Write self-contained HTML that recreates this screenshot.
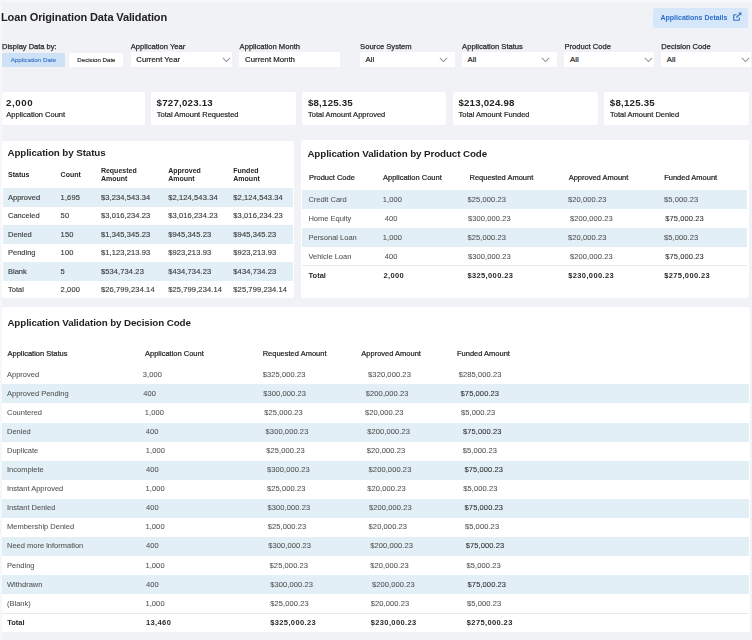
<!DOCTYPE html>
<html><head><meta charset="utf-8"><style>
html,body{margin:0;padding:0;}
body{width:752px;height:640px;overflow:hidden;background:#f0f2f5;position:relative;font-family:"Liberation Sans",sans-serif;}
.t{position:absolute;white-space:nowrap;line-height:1;}
#w{position:absolute;left:0;top:0;width:752px;height:640px;filter:blur(0.4px);}
.r{position:absolute;}
</style></head><body><div id="w">
<div class="r" style="left:0.00px;top:0.00px;width:1.80px;height:640.00px;background:#f6f7f9;"></div>
<div class="r" style="left:0.00px;top:0.00px;width:752.00px;height:1.80px;background:#f6f7f9;"></div>
<div class="t" style="left:1.00px;top:11.79px;font-size:11.0px;font-weight:700;color:#222222;letter-spacing:-0.12px;">Loan Origination Data Validation</div>
<div class="r" style="left:653.00px;top:7.90px;width:95.30px;height:20.00px;background:#d5e7f9;border-radius:3px;"></div>
<div class="t" style="left:660.50px;top:14.17px;font-size:7.0px;font-weight:700;color:#2d6dcc;">Applications Details</div>
<svg class="r" style="left:732px;top:11.9px;width:10px;height:9px" viewBox="0 0 10 9">
<path d="M4.6 2.7H2.2Q1.7 2.7 1.7 3.2V7.7Q1.7 8.2 2.2 8.2H6.9Q7.4 8.2 7.4 7.7V5.4" fill="none" stroke="#3470bd" stroke-width="1.15"/>
<path d="M4.3 5.5L8.7 1.3" fill="none" stroke="#3470bd" stroke-width="1.1"/>
<path d="M6.3 0.6H9.4V3.7Z" fill="#3470bd"/>
</svg>
<div class="t" style="left:2.00px;top:42.65px;font-size:7.5px;color:#2a2a2a;-webkit-text-stroke:0.25px #2a2a2a;">Display Data by:</div>
<div class="r" style="left:2.10px;top:53.00px;width:62.70px;height:14.20px;background:#cee2f7;border-radius:1.5px;"></div>
<div class="t" style="left:10.70px;top:57.11px;font-size:6.25px;color:#3a76c6;-webkit-text-stroke:0.12px #3a76c6;">Application Date</div>
<div class="r" style="left:69.00px;top:53.00px;width:54.00px;height:14.20px;background:#ffffff;border-radius:1.5px;"></div>
<div class="t" style="left:77.30px;top:57.19px;font-size:6.15px;color:#2a2a2a;-webkit-text-stroke:0.15px #2a2a2a;">Decision Date</div>
<div class="t" style="left:130.80px;top:42.97px;font-size:7.6px;color:#2a2a2a;-webkit-text-stroke:0.25px #2a2a2a;">Application Year</div>
<div class="r" style="left:130.50px;top:52.30px;width:101.40px;height:14.30px;background:#ffffff;border-radius:1px;"></div>
<div class="t" style="left:136.30px;top:56.00px;font-size:7.8px;color:#2a2a2a;-webkit-text-stroke:0.22px #2a2a2a;">Current Year</div>
<svg class="r" style="left:222.10px;top:56.8px;width:9px;height:5.5px" viewBox="0 0 9 5.5"><path d="M0.9 0.9L4.5 4.6L8.1 0.9" fill="none" stroke="#94979c" stroke-width="1.05"/></svg>
<div class="t" style="left:239.60px;top:42.97px;font-size:7.6px;color:#2a2a2a;-webkit-text-stroke:0.25px #2a2a2a;">Application Month</div>
<div class="r" style="left:239.30px;top:52.30px;width:101.00px;height:14.30px;background:#ffffff;border-radius:1px;"></div>
<div class="t" style="left:245.10px;top:56.00px;font-size:7.8px;color:#2a2a2a;-webkit-text-stroke:0.22px #2a2a2a;">Current Month</div>
<div class="t" style="left:360.10px;top:42.97px;font-size:7.6px;color:#2a2a2a;-webkit-text-stroke:0.25px #2a2a2a;">Source System</div>
<div class="r" style="left:359.80px;top:52.30px;width:94.80px;height:14.30px;background:#ffffff;border-radius:1px;"></div>
<div class="t" style="left:365.60px;top:56.00px;font-size:7.8px;color:#2a2a2a;-webkit-text-stroke:0.22px #2a2a2a;">All</div>
<svg class="r" style="left:438.80px;top:56.8px;width:9px;height:5.5px" viewBox="0 0 9 5.5"><path d="M0.9 0.9L4.5 4.6L8.1 0.9" fill="none" stroke="#94979c" stroke-width="1.05"/></svg>
<div class="t" style="left:462.10px;top:42.97px;font-size:7.6px;color:#2a2a2a;-webkit-text-stroke:0.25px #2a2a2a;">Application Status</div>
<div class="r" style="left:461.80px;top:52.30px;width:95.20px;height:14.30px;background:#ffffff;border-radius:1px;"></div>
<div class="t" style="left:467.60px;top:56.00px;font-size:7.8px;color:#2a2a2a;-webkit-text-stroke:0.22px #2a2a2a;">All</div>
<svg class="r" style="left:541.40px;top:56.8px;width:9px;height:5.5px" viewBox="0 0 9 5.5"><path d="M0.9 0.9L4.5 4.6L8.1 0.9" fill="none" stroke="#94979c" stroke-width="1.05"/></svg>
<div class="t" style="left:564.50px;top:42.97px;font-size:7.6px;color:#2a2a2a;-webkit-text-stroke:0.25px #2a2a2a;">Product Code</div>
<div class="r" style="left:564.20px;top:52.30px;width:89.70px;height:14.30px;background:#ffffff;border-radius:1px;"></div>
<div class="t" style="left:570.00px;top:56.00px;font-size:7.8px;color:#2a2a2a;-webkit-text-stroke:0.22px #2a2a2a;">All</div>
<svg class="r" style="left:643.80px;top:56.8px;width:9px;height:5.5px" viewBox="0 0 9 5.5"><path d="M0.9 0.9L4.5 4.6L8.1 0.9" fill="none" stroke="#94979c" stroke-width="1.05"/></svg>
<div class="t" style="left:661.30px;top:42.97px;font-size:7.6px;color:#2a2a2a;-webkit-text-stroke:0.25px #2a2a2a;">Decision Code</div>
<div class="r" style="left:661.00px;top:52.30px;width:90.20px;height:14.30px;background:#ffffff;border-radius:1px;"></div>
<div class="t" style="left:666.80px;top:56.00px;font-size:7.8px;color:#2a2a2a;-webkit-text-stroke:0.22px #2a2a2a;">All</div>
<svg class="r" style="left:740.50px;top:56.8px;width:9px;height:5.5px" viewBox="0 0 9 5.5"><path d="M0.9 0.9L4.5 4.6L8.1 0.9" fill="none" stroke="#94979c" stroke-width="1.05"/></svg>
<div class="r" style="left:2.20px;top:91.70px;width:142.80px;height:32.90px;background:#ffffff;border-radius:2px;"></div>
<div class="t" style="left:6.10px;top:98.39px;font-size:9.7px;font-weight:700;color:#222;letter-spacing:0.6px;">2,000</div>
<div class="t" style="left:6.30px;top:110.85px;font-size:7.5px;color:#262626;-webkit-text-stroke:0.2px #262626;">Application Count</div>
<div class="r" style="left:151.00px;top:91.70px;width:144.60px;height:32.90px;background:#ffffff;border-radius:2px;"></div>
<div class="t" style="left:156.60px;top:98.39px;font-size:9.7px;font-weight:700;color:#222;letter-spacing:0.22px;">$727,023.13</div>
<div class="t" style="left:156.80px;top:110.85px;font-size:7.5px;color:#262626;-webkit-text-stroke:0.2px #262626;">Total Amount Requested</div>
<div class="r" style="left:302.30px;top:91.70px;width:143.70px;height:32.90px;background:#ffffff;border-radius:2px;"></div>
<div class="t" style="left:307.90px;top:98.39px;font-size:9.7px;font-weight:700;color:#222;letter-spacing:0.22px;">$8,125.35</div>
<div class="t" style="left:308.10px;top:110.85px;font-size:7.5px;color:#262626;-webkit-text-stroke:0.2px #262626;">Total Amount Approved</div>
<div class="r" style="left:452.80px;top:91.70px;width:144.80px;height:32.90px;background:#ffffff;border-radius:2px;"></div>
<div class="t" style="left:458.40px;top:98.39px;font-size:9.7px;font-weight:700;color:#222;letter-spacing:0.22px;">$213,024.98</div>
<div class="t" style="left:458.60px;top:110.85px;font-size:7.5px;color:#262626;-webkit-text-stroke:0.2px #262626;">Total Amount Funded</div>
<div class="r" style="left:604.20px;top:91.70px;width:144.50px;height:32.90px;background:#ffffff;border-radius:2px;"></div>
<div class="t" style="left:609.80px;top:98.39px;font-size:9.7px;font-weight:700;color:#222;letter-spacing:0.22px;">$8,125.35</div>
<div class="t" style="left:610.00px;top:110.85px;font-size:7.5px;color:#262626;-webkit-text-stroke:0.2px #262626;">Total Amount Denied</div>
<div class="r" style="left:2.30px;top:140.50px;width:291.90px;height:157.40px;background:#ffffff;border-radius:2px;"></div>
<div class="t" style="left:7.50px;top:148.00px;font-size:9.8px;font-weight:700;color:#222222;letter-spacing:-0.1px;">Application by Status</div>
<div class="t" style="left:8.00px;top:171.37px;font-size:7.0px;font-weight:700;color:#262626;">Status</div>
<div class="t" style="left:60.60px;top:171.37px;font-size:7.0px;font-weight:700;color:#262626;">Count</div>
<div class="t" style="left:100.90px;top:167.17px;font-size:7.0px;font-weight:700;color:#262626;">Requested</div>
<div class="t" style="left:100.90px;top:175.47px;font-size:7.0px;font-weight:700;color:#262626;">Amount</div>
<div class="t" style="left:168.20px;top:167.17px;font-size:7.0px;font-weight:700;color:#262626;">Approved</div>
<div class="t" style="left:168.20px;top:175.47px;font-size:7.0px;font-weight:700;color:#262626;">Amount</div>
<div class="t" style="left:233.30px;top:167.17px;font-size:7.0px;font-weight:700;color:#262626;">Funded</div>
<div class="t" style="left:233.30px;top:175.47px;font-size:7.0px;font-weight:700;color:#262626;">Amount</div>
<div class="r" style="left:2.50px;top:188.00px;width:290.70px;height:18.50px;background:#e2eff7;"></div>
<div class="t" style="left:8.00px;top:193.95px;font-size:7.5px;color:#3f3f3f;-webkit-text-stroke:0.15px #3f3f3f;">Approved</div>
<div class="t" style="left:60.60px;top:193.95px;font-size:7.5px;color:#3f3f3f;letter-spacing:0.12px;-webkit-text-stroke:0.15px #3f3f3f;">1,695</div>
<div class="t" style="left:100.90px;top:193.95px;font-size:7.5px;color:#3f3f3f;letter-spacing:0.12px;-webkit-text-stroke:0.15px #3f3f3f;">$3,234,543.34</div>
<div class="t" style="left:168.20px;top:193.95px;font-size:7.5px;color:#3f3f3f;letter-spacing:0.12px;-webkit-text-stroke:0.15px #3f3f3f;">$2,124,543.34</div>
<div class="t" style="left:233.30px;top:193.95px;font-size:7.5px;color:#3f3f3f;letter-spacing:0.12px;-webkit-text-stroke:0.15px #3f3f3f;">$2,124,543.34</div>
<div class="t" style="left:8.00px;top:212.45px;font-size:7.5px;color:#3f3f3f;-webkit-text-stroke:0.15px #3f3f3f;">Canceled</div>
<div class="t" style="left:60.60px;top:212.45px;font-size:7.5px;color:#3f3f3f;letter-spacing:0.12px;-webkit-text-stroke:0.15px #3f3f3f;">50</div>
<div class="t" style="left:100.90px;top:212.45px;font-size:7.5px;color:#3f3f3f;letter-spacing:0.12px;-webkit-text-stroke:0.15px #3f3f3f;">$3,016,234.23</div>
<div class="t" style="left:168.20px;top:212.45px;font-size:7.5px;color:#3f3f3f;letter-spacing:0.12px;-webkit-text-stroke:0.15px #3f3f3f;">$3,016,234.23</div>
<div class="t" style="left:233.30px;top:212.45px;font-size:7.5px;color:#3f3f3f;letter-spacing:0.12px;-webkit-text-stroke:0.15px #3f3f3f;">$3,016,234.23</div>
<div class="r" style="left:2.50px;top:225.00px;width:290.70px;height:18.50px;background:#e2eff7;"></div>
<div class="t" style="left:8.00px;top:230.95px;font-size:7.5px;color:#3f3f3f;-webkit-text-stroke:0.15px #3f3f3f;">Denied</div>
<div class="t" style="left:60.60px;top:230.95px;font-size:7.5px;color:#3f3f3f;letter-spacing:0.12px;-webkit-text-stroke:0.15px #3f3f3f;">150</div>
<div class="t" style="left:100.90px;top:230.95px;font-size:7.5px;color:#3f3f3f;letter-spacing:0.12px;-webkit-text-stroke:0.15px #3f3f3f;">$1,345,345.23</div>
<div class="t" style="left:168.20px;top:230.95px;font-size:7.5px;color:#3f3f3f;letter-spacing:0.12px;-webkit-text-stroke:0.15px #3f3f3f;">$945,345.23</div>
<div class="t" style="left:233.30px;top:230.95px;font-size:7.5px;color:#3f3f3f;letter-spacing:0.12px;-webkit-text-stroke:0.15px #3f3f3f;">$945,345.23</div>
<div class="t" style="left:8.00px;top:249.45px;font-size:7.5px;color:#3f3f3f;-webkit-text-stroke:0.15px #3f3f3f;">Pending</div>
<div class="t" style="left:60.60px;top:249.45px;font-size:7.5px;color:#3f3f3f;letter-spacing:0.12px;-webkit-text-stroke:0.15px #3f3f3f;">100</div>
<div class="t" style="left:100.90px;top:249.45px;font-size:7.5px;color:#3f3f3f;letter-spacing:0.12px;-webkit-text-stroke:0.15px #3f3f3f;">$1,123,213.93</div>
<div class="t" style="left:168.20px;top:249.45px;font-size:7.5px;color:#3f3f3f;letter-spacing:0.12px;-webkit-text-stroke:0.15px #3f3f3f;">$923,213.93</div>
<div class="t" style="left:233.30px;top:249.45px;font-size:7.5px;color:#3f3f3f;letter-spacing:0.12px;-webkit-text-stroke:0.15px #3f3f3f;">$923,213.93</div>
<div class="r" style="left:2.50px;top:262.00px;width:290.70px;height:18.50px;background:#e2eff7;"></div>
<div class="t" style="left:8.00px;top:267.95px;font-size:7.5px;color:#3f3f3f;-webkit-text-stroke:0.15px #3f3f3f;">Blank</div>
<div class="t" style="left:60.60px;top:267.95px;font-size:7.5px;color:#3f3f3f;letter-spacing:0.12px;-webkit-text-stroke:0.15px #3f3f3f;">5</div>
<div class="t" style="left:100.90px;top:267.95px;font-size:7.5px;color:#3f3f3f;letter-spacing:0.12px;-webkit-text-stroke:0.15px #3f3f3f;">$534,734.23</div>
<div class="t" style="left:168.20px;top:267.95px;font-size:7.5px;color:#3f3f3f;letter-spacing:0.12px;-webkit-text-stroke:0.15px #3f3f3f;">$434,734.23</div>
<div class="t" style="left:233.30px;top:267.95px;font-size:7.5px;color:#3f3f3f;letter-spacing:0.12px;-webkit-text-stroke:0.15px #3f3f3f;">$434,734.23</div>
<div class="t" style="left:8.00px;top:286.45px;font-size:7.5px;color:#3f3f3f;-webkit-text-stroke:0.15px #3f3f3f;">Total</div>
<div class="t" style="left:60.60px;top:286.45px;font-size:7.5px;color:#3f3f3f;letter-spacing:0.12px;-webkit-text-stroke:0.15px #3f3f3f;">2,000</div>
<div class="t" style="left:100.90px;top:286.45px;font-size:7.5px;color:#3f3f3f;letter-spacing:0.12px;-webkit-text-stroke:0.15px #3f3f3f;">$26,799,234.14</div>
<div class="t" style="left:168.20px;top:286.45px;font-size:7.5px;color:#3f3f3f;letter-spacing:0.12px;-webkit-text-stroke:0.15px #3f3f3f;">$25,799,234.14</div>
<div class="t" style="left:233.30px;top:286.45px;font-size:7.5px;color:#3f3f3f;letter-spacing:0.12px;-webkit-text-stroke:0.15px #3f3f3f;">$25,799,234.14</div>
<div class="r" style="left:301.00px;top:139.80px;width:448.20px;height:158.10px;background:#ffffff;border-radius:2px;"></div>
<div class="t" style="left:307.40px;top:148.70px;font-size:9.8px;font-weight:700;color:#222222;letter-spacing:-0.1px;">Application Validation by Product Code</div>
<div class="t" style="left:309.00px;top:174.25px;font-size:7.5px;color:#262626;-webkit-text-stroke:0.22px #262626;">Product Code</div>
<div class="t" style="left:383.00px;top:174.25px;font-size:7.5px;color:#262626;-webkit-text-stroke:0.22px #262626;">Application Count</div>
<div class="t" style="left:469.50px;top:174.25px;font-size:7.5px;color:#262626;-webkit-text-stroke:0.22px #262626;">Requested Amount</div>
<div class="t" style="left:568.70px;top:174.25px;font-size:7.5px;color:#262626;-webkit-text-stroke:0.22px #262626;">Approved Amount</div>
<div class="t" style="left:664.20px;top:174.25px;font-size:7.5px;color:#262626;-webkit-text-stroke:0.22px #262626;">Funded Amount</div>
<div class="r" style="left:301.60px;top:190.00px;width:445.80px;height:18.90px;background:#e2eff7;"></div>
<div class="t" style="left:308.40px;top:195.85px;font-size:7.5px;color:#545454;-webkit-text-stroke:0.06px #545454;">Credit Card</div>
<div class="t" style="left:382.80px;top:195.85px;font-size:7.5px;color:#545454;letter-spacing:0.1px;-webkit-text-stroke:0.06px #545454;">1,000</div>
<div class="t" style="left:467.40px;top:195.85px;font-size:7.5px;color:#545454;letter-spacing:0.1px;-webkit-text-stroke:0.06px #545454;">$25,000.23</div>
<div class="t" style="left:568.00px;top:195.85px;font-size:7.5px;color:#545454;letter-spacing:0.1px;-webkit-text-stroke:0.06px #545454;">$20,000.23</div>
<div class="t" style="left:664.00px;top:195.85px;font-size:7.5px;color:#545454;letter-spacing:0.1px;-webkit-text-stroke:0.06px #545454;">$5,000.23</div>
<div class="t" style="left:308.40px;top:214.75px;font-size:7.5px;color:#545454;-webkit-text-stroke:0.06px #545454;">Home Equity</div>
<div class="t" style="left:384.80px;top:214.75px;font-size:7.5px;color:#545454;letter-spacing:0.1px;-webkit-text-stroke:0.06px #545454;">400</div>
<div class="t" style="left:468.00px;top:214.75px;font-size:7.5px;color:#545454;letter-spacing:0.1px;-webkit-text-stroke:0.06px #545454;">$300,000.23</div>
<div class="t" style="left:570.00px;top:214.75px;font-size:7.5px;color:#545454;letter-spacing:0.1px;-webkit-text-stroke:0.06px #545454;">$200,000.23</div>
<div class="t" style="left:665.30px;top:214.75px;font-size:7.5px;color:#2e2e2e;letter-spacing:0.1px;-webkit-text-stroke:0.06px #2e2e2e;">$75,000.23</div>
<div class="r" style="left:301.60px;top:227.80px;width:445.80px;height:18.90px;background:#e2eff7;"></div>
<div class="t" style="left:308.40px;top:233.65px;font-size:7.5px;color:#545454;-webkit-text-stroke:0.06px #545454;">Personal Loan</div>
<div class="t" style="left:382.80px;top:233.65px;font-size:7.5px;color:#545454;letter-spacing:0.1px;-webkit-text-stroke:0.06px #545454;">1,000</div>
<div class="t" style="left:467.40px;top:233.65px;font-size:7.5px;color:#545454;letter-spacing:0.1px;-webkit-text-stroke:0.06px #545454;">$25,000.23</div>
<div class="t" style="left:568.00px;top:233.65px;font-size:7.5px;color:#545454;letter-spacing:0.1px;-webkit-text-stroke:0.06px #545454;">$20,000.23</div>
<div class="t" style="left:664.00px;top:233.65px;font-size:7.5px;color:#545454;letter-spacing:0.1px;-webkit-text-stroke:0.06px #545454;">$5,000.23</div>
<div class="t" style="left:308.40px;top:252.55px;font-size:7.5px;color:#545454;-webkit-text-stroke:0.06px #545454;">Vehicle Loan</div>
<div class="t" style="left:384.80px;top:252.55px;font-size:7.5px;color:#545454;letter-spacing:0.1px;-webkit-text-stroke:0.06px #545454;">400</div>
<div class="t" style="left:468.00px;top:252.55px;font-size:7.5px;color:#545454;letter-spacing:0.1px;-webkit-text-stroke:0.06px #545454;">$300,000.23</div>
<div class="t" style="left:570.00px;top:252.55px;font-size:7.5px;color:#545454;letter-spacing:0.1px;-webkit-text-stroke:0.06px #545454;">$200,000.23</div>
<div class="t" style="left:665.30px;top:252.55px;font-size:7.5px;color:#2e2e2e;letter-spacing:0.1px;-webkit-text-stroke:0.06px #2e2e2e;">$75,000.23</div>
<div class="r" style="left:301.60px;top:265.30px;width:445.80px;height:1.00px;background:#e6e8ec;"></div>
<div class="t" style="left:308.60px;top:272.45px;font-size:7.5px;font-weight:700;color:#2a2a2a;">Total</div>
<div class="t" style="left:383.40px;top:272.45px;font-size:7.5px;font-weight:700;color:#2a2a2a;letter-spacing:0.38px;">2,000</div>
<div class="t" style="left:467.40px;top:272.45px;font-size:7.5px;font-weight:700;color:#2a2a2a;letter-spacing:0.38px;">$325,000.23</div>
<div class="t" style="left:568.20px;top:272.45px;font-size:7.5px;font-weight:700;color:#2a2a2a;letter-spacing:0.38px;">$230,000.23</div>
<div class="t" style="left:664.20px;top:272.45px;font-size:7.5px;font-weight:700;color:#2a2a2a;letter-spacing:0.38px;">$275,000.23</div>
<div class="r" style="left:2.20px;top:307.30px;width:747.60px;height:324.70px;background:#ffffff;border-radius:2px;"></div>
<div class="t" style="left:7.40px;top:318.20px;font-size:9.8px;font-weight:700;color:#222222;letter-spacing:-0.1px;">Application Validation by Decision Code</div>
<div class="t" style="left:7.50px;top:349.55px;font-size:7.5px;color:#262626;-webkit-text-stroke:0.22px #262626;">Application Status</div>
<div class="t" style="left:145.00px;top:349.55px;font-size:7.5px;color:#262626;-webkit-text-stroke:0.22px #262626;">Application Count</div>
<div class="t" style="left:262.70px;top:349.55px;font-size:7.5px;color:#262626;-webkit-text-stroke:0.22px #262626;">Requested Amount</div>
<div class="t" style="left:361.30px;top:349.55px;font-size:7.5px;color:#262626;-webkit-text-stroke:0.22px #262626;">Approved Amount</div>
<div class="t" style="left:457.00px;top:349.55px;font-size:7.5px;color:#262626;-webkit-text-stroke:0.22px #262626;">Funded Amount</div>
<div class="t" style="left:7.00px;top:370.85px;font-size:7.5px;color:#545454;-webkit-text-stroke:0.06px #545454;">Approved</div>
<div class="t" style="left:142.70px;top:370.85px;font-size:7.5px;color:#545454;letter-spacing:0.1px;-webkit-text-stroke:0.06px #545454;">3,000</div>
<div class="t" style="left:262.70px;top:370.85px;font-size:7.5px;color:#545454;letter-spacing:0.1px;-webkit-text-stroke:0.06px #545454;">$325,000.23</div>
<div class="t" style="left:368.10px;top:370.85px;font-size:7.5px;color:#545454;letter-spacing:0.1px;-webkit-text-stroke:0.06px #545454;">$320,000.23</div>
<div class="t" style="left:458.70px;top:370.85px;font-size:7.5px;color:#545454;letter-spacing:0.1px;-webkit-text-stroke:0.06px #545454;">$285,000.23</div>
<div class="r" style="left:1.60px;top:384.37px;width:747.60px;height:19.07px;background:#e2eff7;"></div>
<div class="t" style="left:7.00px;top:389.92px;font-size:7.5px;color:#545454;-webkit-text-stroke:0.06px #545454;">Approved Pending</div>
<div class="t" style="left:143.20px;top:389.92px;font-size:7.5px;color:#545454;letter-spacing:0.1px;-webkit-text-stroke:0.06px #545454;">400</div>
<div class="t" style="left:263.30px;top:389.92px;font-size:7.5px;color:#545454;letter-spacing:0.1px;-webkit-text-stroke:0.06px #545454;">$300,000.23</div>
<div class="t" style="left:365.80px;top:389.92px;font-size:7.5px;color:#545454;letter-spacing:0.1px;-webkit-text-stroke:0.06px #545454;">$200,000.23</div>
<div class="t" style="left:460.60px;top:389.92px;font-size:7.5px;color:#2e2e2e;letter-spacing:0.1px;-webkit-text-stroke:0.06px #2e2e2e;">$75,000.23</div>
<div class="t" style="left:7.00px;top:408.99px;font-size:7.5px;color:#545454;-webkit-text-stroke:0.06px #545454;">Countered</div>
<div class="t" style="left:144.70px;top:408.99px;font-size:7.5px;color:#545454;letter-spacing:0.1px;-webkit-text-stroke:0.06px #545454;">1,000</div>
<div class="t" style="left:264.30px;top:408.99px;font-size:7.5px;color:#545454;letter-spacing:0.1px;-webkit-text-stroke:0.06px #545454;">$25,000.23</div>
<div class="t" style="left:364.90px;top:408.99px;font-size:7.5px;color:#545454;letter-spacing:0.1px;-webkit-text-stroke:0.06px #545454;">$20,000.23</div>
<div class="t" style="left:461.00px;top:408.99px;font-size:7.5px;color:#545454;letter-spacing:0.1px;-webkit-text-stroke:0.06px #545454;">$5,000.23</div>
<div class="r" style="left:1.60px;top:422.51px;width:747.60px;height:19.07px;background:#e2eff7;"></div>
<div class="t" style="left:7.00px;top:428.06px;font-size:7.5px;color:#545454;-webkit-text-stroke:0.06px #545454;">Denied</div>
<div class="t" style="left:145.70px;top:428.06px;font-size:7.5px;color:#545454;letter-spacing:0.1px;-webkit-text-stroke:0.06px #545454;">400</div>
<div class="t" style="left:265.60px;top:428.06px;font-size:7.5px;color:#545454;letter-spacing:0.1px;-webkit-text-stroke:0.06px #545454;">$300,000.23</div>
<div class="t" style="left:367.30px;top:428.06px;font-size:7.5px;color:#545454;letter-spacing:0.1px;-webkit-text-stroke:0.06px #545454;">$200,000.23</div>
<div class="t" style="left:463.00px;top:428.06px;font-size:7.5px;color:#2e2e2e;letter-spacing:0.1px;-webkit-text-stroke:0.06px #2e2e2e;">$75,000.23</div>
<div class="t" style="left:7.00px;top:447.13px;font-size:7.5px;color:#545454;-webkit-text-stroke:0.06px #545454;">Duplicate</div>
<div class="t" style="left:145.70px;top:447.13px;font-size:7.5px;color:#545454;letter-spacing:0.1px;-webkit-text-stroke:0.06px #545454;">1,000</div>
<div class="t" style="left:266.20px;top:447.13px;font-size:7.5px;color:#545454;letter-spacing:0.1px;-webkit-text-stroke:0.06px #545454;">$25,000.23</div>
<div class="t" style="left:366.80px;top:447.13px;font-size:7.5px;color:#545454;letter-spacing:0.1px;-webkit-text-stroke:0.06px #545454;">$20,000.23</div>
<div class="t" style="left:462.80px;top:447.13px;font-size:7.5px;color:#545454;letter-spacing:0.1px;-webkit-text-stroke:0.06px #545454;">$5,000.23</div>
<div class="r" style="left:1.60px;top:460.65px;width:747.60px;height:19.07px;background:#e2eff7;"></div>
<div class="t" style="left:7.00px;top:466.20px;font-size:7.5px;color:#545454;-webkit-text-stroke:0.06px #545454;">Incomplete</div>
<div class="t" style="left:146.00px;top:466.20px;font-size:7.5px;color:#545454;letter-spacing:0.1px;-webkit-text-stroke:0.06px #545454;">400</div>
<div class="t" style="left:267.00px;top:466.20px;font-size:7.5px;color:#545454;letter-spacing:0.1px;-webkit-text-stroke:0.06px #545454;">$300,000.23</div>
<div class="t" style="left:368.60px;top:466.20px;font-size:7.5px;color:#545454;letter-spacing:0.1px;-webkit-text-stroke:0.06px #545454;">$200,000.23</div>
<div class="t" style="left:464.40px;top:466.20px;font-size:7.5px;color:#2e2e2e;letter-spacing:0.1px;-webkit-text-stroke:0.06px #2e2e2e;">$75,000.23</div>
<div class="t" style="left:7.00px;top:485.27px;font-size:7.5px;color:#545454;-webkit-text-stroke:0.06px #545454;">Instant Approved</div>
<div class="t" style="left:145.60px;top:485.27px;font-size:7.5px;color:#545454;letter-spacing:0.1px;-webkit-text-stroke:0.06px #545454;">1,000</div>
<div class="t" style="left:267.00px;top:485.27px;font-size:7.5px;color:#545454;letter-spacing:0.1px;-webkit-text-stroke:0.06px #545454;">$25,000.23</div>
<div class="t" style="left:367.30px;top:485.27px;font-size:7.5px;color:#545454;letter-spacing:0.1px;-webkit-text-stroke:0.06px #545454;">$20,000.23</div>
<div class="t" style="left:463.30px;top:485.27px;font-size:7.5px;color:#545454;letter-spacing:0.1px;-webkit-text-stroke:0.06px #545454;">$5,000.23</div>
<div class="r" style="left:1.60px;top:498.79px;width:747.60px;height:19.07px;background:#e2eff7;"></div>
<div class="t" style="left:7.00px;top:504.34px;font-size:7.5px;color:#545454;-webkit-text-stroke:0.06px #545454;">Instant Denied</div>
<div class="t" style="left:146.00px;top:504.34px;font-size:7.5px;color:#545454;letter-spacing:0.1px;-webkit-text-stroke:0.06px #545454;">400</div>
<div class="t" style="left:267.50px;top:504.34px;font-size:7.5px;color:#545454;letter-spacing:0.1px;-webkit-text-stroke:0.06px #545454;">$300,000.23</div>
<div class="t" style="left:369.00px;top:504.34px;font-size:7.5px;color:#545454;letter-spacing:0.1px;-webkit-text-stroke:0.06px #545454;">$200,000.23</div>
<div class="t" style="left:464.60px;top:504.34px;font-size:7.5px;color:#2e2e2e;letter-spacing:0.1px;-webkit-text-stroke:0.06px #2e2e2e;">$75,000.23</div>
<div class="t" style="left:7.00px;top:523.41px;font-size:7.5px;color:#545454;-webkit-text-stroke:0.06px #545454;">Membership Denied</div>
<div class="t" style="left:145.40px;top:523.41px;font-size:7.5px;color:#545454;letter-spacing:0.1px;-webkit-text-stroke:0.06px #545454;">1,000</div>
<div class="t" style="left:267.80px;top:523.41px;font-size:7.5px;color:#545454;letter-spacing:0.1px;-webkit-text-stroke:0.06px #545454;">$25,000.23</div>
<div class="t" style="left:368.60px;top:523.41px;font-size:7.5px;color:#545454;letter-spacing:0.1px;-webkit-text-stroke:0.06px #545454;">$20,000.23</div>
<div class="t" style="left:464.90px;top:523.41px;font-size:7.5px;color:#545454;letter-spacing:0.1px;-webkit-text-stroke:0.06px #545454;">$5,000.23</div>
<div class="r" style="left:1.60px;top:536.93px;width:747.60px;height:19.07px;background:#e2eff7;"></div>
<div class="t" style="left:7.00px;top:542.48px;font-size:7.5px;color:#545454;-webkit-text-stroke:0.06px #545454;">Need more information</div>
<div class="t" style="left:145.90px;top:542.48px;font-size:7.5px;color:#545454;letter-spacing:0.1px;-webkit-text-stroke:0.06px #545454;">400</div>
<div class="t" style="left:268.30px;top:542.48px;font-size:7.5px;color:#545454;letter-spacing:0.1px;-webkit-text-stroke:0.06px #545454;">$300,000.23</div>
<div class="t" style="left:370.20px;top:542.48px;font-size:7.5px;color:#545454;letter-spacing:0.1px;-webkit-text-stroke:0.06px #545454;">$200,000.23</div>
<div class="t" style="left:465.70px;top:542.48px;font-size:7.5px;color:#2e2e2e;letter-spacing:0.1px;-webkit-text-stroke:0.06px #2e2e2e;">$75,000.23</div>
<div class="t" style="left:7.00px;top:561.55px;font-size:7.5px;color:#545454;-webkit-text-stroke:0.06px #545454;">Pending</div>
<div class="t" style="left:145.40px;top:561.55px;font-size:7.5px;color:#545454;letter-spacing:0.1px;-webkit-text-stroke:0.06px #545454;">1,000</div>
<div class="t" style="left:269.60px;top:561.55px;font-size:7.5px;color:#545454;letter-spacing:0.1px;-webkit-text-stroke:0.06px #545454;">$25,000.23</div>
<div class="t" style="left:370.20px;top:561.55px;font-size:7.5px;color:#545454;letter-spacing:0.1px;-webkit-text-stroke:0.06px #545454;">$20,000.23</div>
<div class="t" style="left:466.50px;top:561.55px;font-size:7.5px;color:#545454;letter-spacing:0.1px;-webkit-text-stroke:0.06px #545454;">$5,000.23</div>
<div class="r" style="left:1.60px;top:575.07px;width:747.60px;height:19.07px;background:#e2eff7;"></div>
<div class="t" style="left:7.00px;top:580.62px;font-size:7.5px;color:#545454;-webkit-text-stroke:0.06px #545454;">Withdrawn</div>
<div class="t" style="left:145.90px;top:580.62px;font-size:7.5px;color:#545454;letter-spacing:0.1px;-webkit-text-stroke:0.06px #545454;">400</div>
<div class="t" style="left:270.20px;top:580.62px;font-size:7.5px;color:#545454;letter-spacing:0.1px;-webkit-text-stroke:0.06px #545454;">$300,000.23</div>
<div class="t" style="left:372.00px;top:580.62px;font-size:7.5px;color:#545454;letter-spacing:0.1px;-webkit-text-stroke:0.06px #545454;">$200,000.23</div>
<div class="t" style="left:467.60px;top:580.62px;font-size:7.5px;color:#2e2e2e;letter-spacing:0.1px;-webkit-text-stroke:0.06px #2e2e2e;">$75,000.23</div>
<div class="t" style="left:7.00px;top:599.69px;font-size:7.5px;color:#545454;-webkit-text-stroke:0.06px #545454;">(Blank)</div>
<div class="t" style="left:145.40px;top:599.69px;font-size:7.5px;color:#545454;letter-spacing:0.1px;-webkit-text-stroke:0.06px #545454;">1,000</div>
<div class="t" style="left:270.20px;top:599.69px;font-size:7.5px;color:#545454;letter-spacing:0.1px;-webkit-text-stroke:0.06px #545454;">$25,000.23</div>
<div class="t" style="left:370.70px;top:599.69px;font-size:7.5px;color:#545454;letter-spacing:0.1px;-webkit-text-stroke:0.06px #545454;">$20,000.23</div>
<div class="t" style="left:467.00px;top:599.69px;font-size:7.5px;color:#545454;letter-spacing:0.1px;-webkit-text-stroke:0.06px #545454;">$5,000.23</div>
<div class="r" style="left:1.60px;top:613.01px;width:747.60px;height:1.00px;background:#e6e8ec;"></div>
<div class="t" style="left:7.20px;top:619.16px;font-size:7.5px;font-weight:700;color:#2a2a2a;">Total</div>
<div class="t" style="left:146.00px;top:619.16px;font-size:7.5px;font-weight:700;color:#2a2a2a;letter-spacing:0.38px;">13,460</div>
<div class="t" style="left:270.20px;top:619.16px;font-size:7.5px;font-weight:700;color:#2a2a2a;letter-spacing:0.38px;">$325,000.23</div>
<div class="t" style="left:370.70px;top:619.16px;font-size:7.5px;font-weight:700;color:#2a2a2a;letter-spacing:0.38px;">$230,000.23</div>
<div class="t" style="left:466.80px;top:619.16px;font-size:7.5px;font-weight:700;color:#2a2a2a;letter-spacing:0.38px;">$275,000.23</div>
</div></body></html>
